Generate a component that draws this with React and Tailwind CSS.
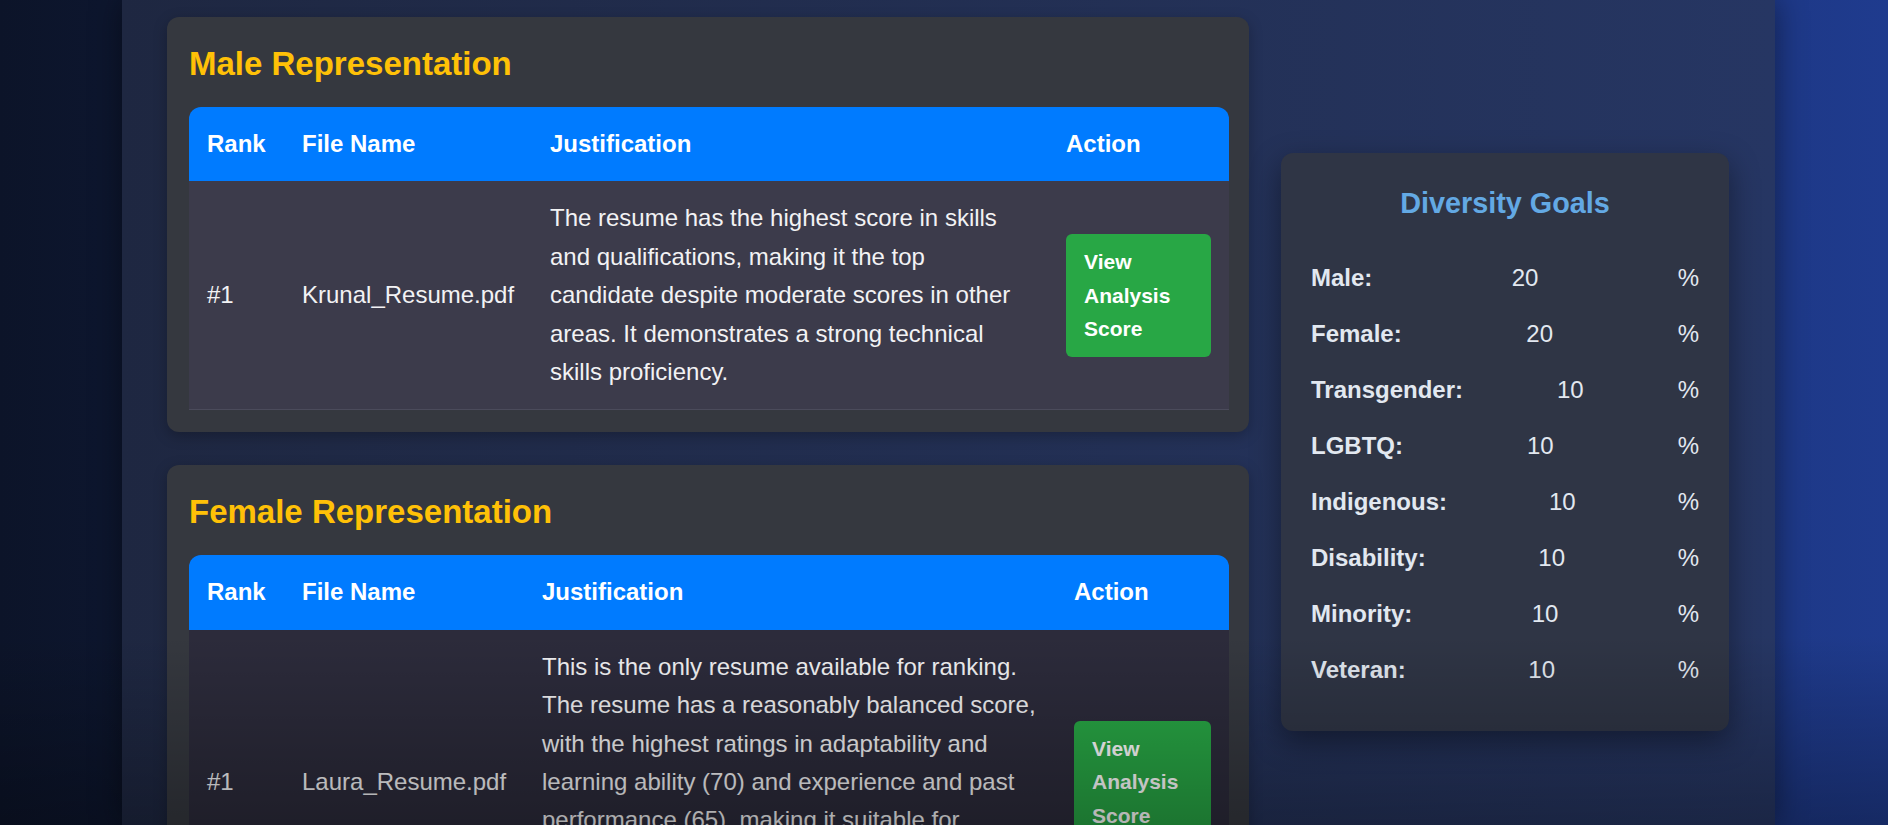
const goals = [
  ["Male:", "20"],
  ["Female:", "20"],
  ["Transgender:", "10"],
  ["LGBTQ:", "10"],
  ["Indigenous:", "10"],
  ["Disability:", "10"],
  ["Minority:", "10"],
  ["Veteran:", "10"],
];

function RankTable({ cols, file, text, bodyBg }) {
  return (
    <table className="w-[1040px] table-fixed border-separate border-spacing-0">
      <colgroup>
        {cols.map((w, i) => (
          <col key={i} style={{ width: w }} />
        ))}
      </colgroup>
      <thead>
        <tr>
          <th className="rounded-tl-[12px] bg-[#007bff] px-[18px] py-[18px] text-left text-[24px] leading-[38.4px] font-bold text-white">Rank</th>
          <th className="bg-[#007bff] px-[18px] py-[18px] text-left text-[24px] leading-[38.4px] font-bold text-white">File Name</th>
          <th className="bg-[#007bff] px-[18px] py-[18px] text-left text-[24px] leading-[38.4px] font-bold text-white">Justification</th>
          <th className="rounded-tr-[12px] bg-[#007bff] px-[18px] py-[18px] text-left text-[24px] leading-[38.4px] font-bold text-white">Action</th>
        </tr>
      </thead>
      <tbody>
        <tr className={bodyBg}>
          <td className="border-b border-[#4b4b5b] px-[18px] py-[18px] align-middle text-[24px] leading-[38.4px] text-[#f2f2f4]">#1</td>
          <td className="whitespace-nowrap border-b border-[#4b4b5b] px-[18px] py-[18px] align-middle text-[24px] leading-[38.4px] text-[#f2f2f4]">{file}</td>
          <td className="border-b border-[#4b4b5b] px-[18px] py-[18px] align-middle text-[24px] leading-[38.4px] text-[#f2f2f4]">{text}</td>
          <td className="border-b border-[#4b4b5b] px-[18px] py-[18px] align-middle">
            <button className="w-full rounded-[6px] bg-[#28a745] px-[18px] py-[11px] text-left text-[21px] leading-[33.6px] font-bold text-white">
              View Analysis Score
            </button>
          </td>
        </tr>
      </tbody>
    </table>
  );
}

export default function App() {
  return (
    <div className="relative flex h-[825px] overflow-hidden bg-linear-to-r from-[#0c1429] to-[#1f3b8e] pl-[122px] pr-[113px] font-['Liberation_Sans',Arial,Helvetica,sans-serif]">
      <div className="flex flex-1 items-start gap-[32px] bg-linear-to-r from-[#1e2741] to-[#263663] px-[45px] pt-[17px] shadow-[0_0_30px_rgba(0,0,0,0.45)]">
        <div className="flex w-[1082px] shrink-0 flex-col gap-[33px]">
          <section className="rounded-[12px] bg-[#35383f] pl-[22px] pr-[20px] pt-[27px] pb-[22px] shadow-[0_4px_14px_rgba(0,0,0,0.25)]">
            <h2 className="mb-[23px] text-[33px] leading-[40px] font-bold text-[#ffc107]">Male Representation</h2>
            <RankTable
              cols={[95, 248, 516, 181]}
              file="Krunal_Resume.pdf"
              bodyBg="bg-[#3c3b4b]"
              text="The resume has the highest score in skills and qualifications, making it the top candidate despite moderate scores in other areas. It demonstrates a strong technical skills proficiency."
            />
          </section>
          <section className="rounded-[12px] bg-[#35383f] pl-[22px] pr-[20px] pt-[27px] pb-[22px] shadow-[0_4px_14px_rgba(0,0,0,0.25)]">
            <h2 className="mb-[23px] text-[33px] leading-[40px] font-bold text-[#ffc107]">Female Representation</h2>
            <RankTable
              cols={[95, 240, 532, 173]}
              file="Laura_Resume.pdf"
              bodyBg="bg-[#2c2b3b]"
              text="This is the only resume available for ranking. The resume has a reasonably balanced score, with the highest ratings in adaptability and learning ability (70) and experience and past performance (65), making it suitable for positions that value adaptability, continuous learning and hands-on experience."
            />
          </section>
        </div>

        <div className="mt-[136px] w-[448px] shrink-0">
          <div className="rounded-[12px] bg-[#2f3545] px-[30px] pt-[32px] pb-[33px] shadow-[0_10px_30px_rgba(0,0,0,0.4)]">
            <h3 className="mb-[29px] text-center text-[28.8px] leading-[36px] font-bold text-[#63a9e4]">Diversity Goals</h3>
            {goals.map(([label, value]) => (
              <div key={label} className="flex h-[56px] items-center text-[24px] text-[#e2e8f0]">
                <label className="whitespace-nowrap font-bold">{label}</label>
                <input
                  readOnly
                  value={value}
                  className="min-w-0 flex-1 border-0 bg-transparent p-0 text-center text-[24px] text-[#e2e8f0] outline-none"
                />
                <span>%</span>
              </div>
            ))}
          </div>
        </div>
      </div>
      <div className="pointer-events-none absolute inset-x-0 bottom-0 h-[190px] bg-linear-to-b from-transparent to-black/30" />
    </div>
  );
}
